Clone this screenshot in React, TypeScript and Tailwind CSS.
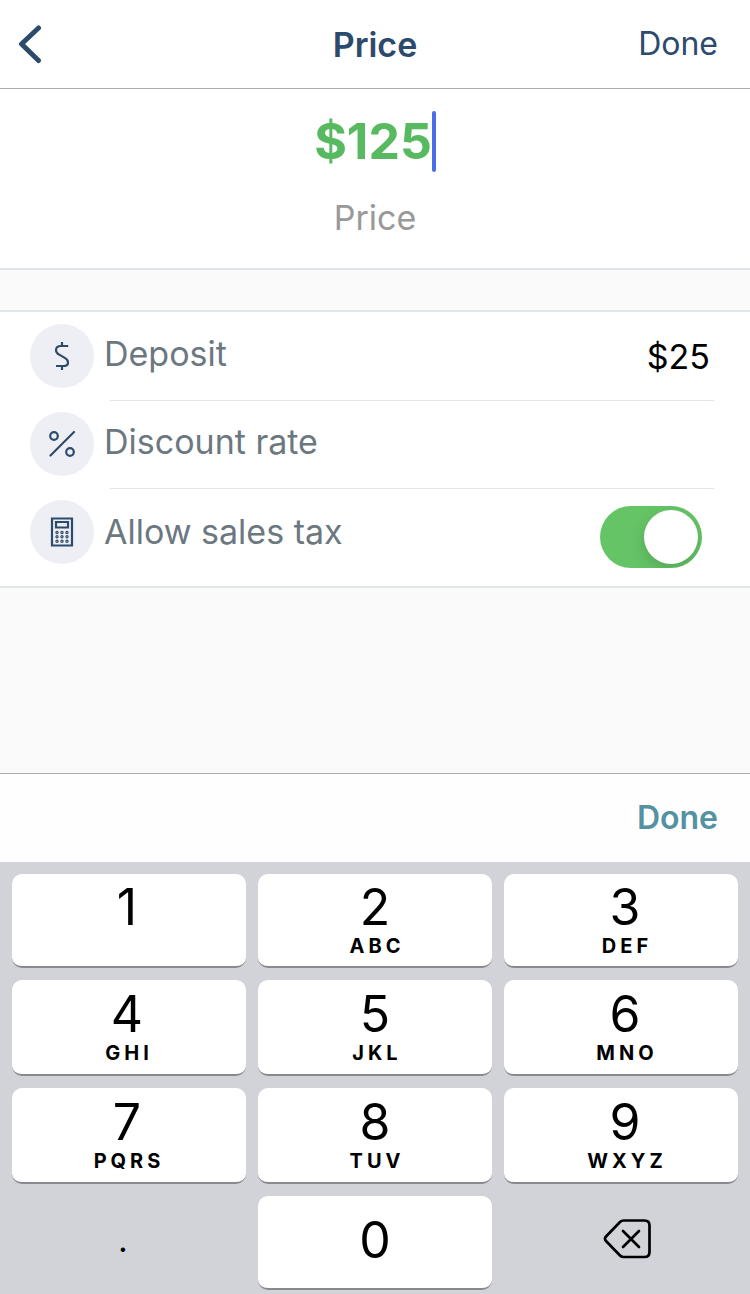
import React, { useState } from 'react';
import clsx from 'clsx';

const keys = [
  { digit: '1', letters: '' },
  { digit: '2', letters: 'ABC' },
  { digit: '3', letters: 'DEF' },
  { digit: '4', letters: 'GHI' },
  { digit: '5', letters: 'JKL' },
  { digit: '6', letters: 'MNO' },
  { digit: '7', letters: 'PQRS' },
  { digit: '8', letters: 'TUV' },
  { digit: '9', letters: 'WXYZ' },
];

const dots = [
  [27, 32.5], [32, 32.5], [37, 32.5],
  [27, 36.8], [32, 36.8], [37, 36.8],
  [27, 41.2], [32, 41.2], [37, 41.2],
];

const BackIcon = () => (
  <svg className="w-6 h-10" viewBox="0 0 24 40" fill="none" stroke="currentColor" strokeWidth="5" strokeLinecap="round" strokeLinejoin="round">
    <path d="M20.5 4 L3.5 20 L20.5 36.5" />
  </svg>
);

const DollarIcon = () => (
  <svg className="w-16 h-16" viewBox="0 0 64 64" fill="none" stroke="currentColor" strokeWidth="2.2">
    <path d="M32 18v4M32 42v4" />
    <path d="M38.2 22H31c-3.200 0-5 1.700-5 4.200 0 2.300 1.300 3.400 3.600 4.700l4.800 2.700c2.300 1.300 3.600 2.600 3.600 4.800 0 2.300-1.700 3.600-4.600 3.600H26" />
  </svg>
);

const PercentIcon = () => (
  <svg className="w-16 h-16" viewBox="0 0 64 64" fill="none" stroke="currentColor" strokeWidth="2.2" strokeLinecap="round">
    <circle cx="24" cy="24" r="3.8" />
    <circle cx="40" cy="40" r="3.8" />
    <path d="M20.5 43.5 44 20" />
  </svg>
);

const CalculatorIcon = () => (
  <svg className="w-16 h-16" viewBox="0 0 64 64" fill="none" stroke="currentColor" strokeWidth="2.2">
    <path d="M22 18.500h20v27H22z" />
    <path d="M26 22h12v5.500H26z" />
    {dots.map(([x, y]) => (
      <circle key={`${x}-${y}`} cx={x} cy={y} r="1.1" strokeWidth="1.2" />
    ))}
  </svg>
);

const DeleteIcon = () => (
  <svg className="w-12 h-10" viewBox="0 0 48 40" fill="none" stroke="currentColor" strokeWidth="2.700" strokeLinecap="round" strokeLinejoin="round">
    <path d="M20.500 1.500H41.500Q46.500 1.500 46.500 6.500V33Q46.500 38 41.500 38H20.500Q18.500 38 17 36.500L3 22Q1 19.700 3 17.500L17 3Q18.500 1.500 20.500 1.500Z" />
    <path d="M20 12 36 28M36 12 20 28" />
  </svg>
);

const iconClass = 'w-16 h-16 shrink-0 rounded-full bg-[#eeeff4] text-[#2c4a6b]';
const labelClass = 'ml-[10px] whitespace-nowrap text-[34px] leading-[60px] text-[#6c7880]';
const fieldClass = 'h-16 min-w-0 flex-1 bg-transparent text-right text-[34px] text-black outline-none';
const keyClass = 'flex flex-col items-center justify-center rounded-[10px] border-b-2 border-[#88898d] bg-white';

const App = () => {
  const [price, setPrice] = useState('$125');
  const [deposit, setDeposit] = useState('$25');
  const [discount, setDiscount] = useState('');
  const [tax, setTax] = useState(true);

  const press = (digit: string) => setPrice((value) => value + digit);

  return (
    <div className="flex min-h-screen flex-col bg-[#fafafa] font-['Inter',sans-serif]">
      {/* Navigation bar */}
      <header className="grid h-[89px] grid-cols-3 items-center border-b border-[#adadad] bg-white px-8 text-[#2c4a6b]">
        <button aria-label="Back" className="-ml-3.5 justify-self-start">
          <BackIcon />
        </button>
        <h1 className="text-center text-[34px] font-semibold">Price</h1>
        <button className="justify-self-end text-[32px]">Done</button>
      </header>

      {/* Price entry */}
      <section className="flex flex-col items-center border-b-2 border-[#dfe5e8] bg-white pt-[22px] pb-6">
        <div className="flex items-center">
          <input
            id="price"
            value={price}
            onChange={(e) => setPrice(e.target.value)}
            className="h-[61px] bg-transparent text-[50px] font-bold text-[#57b960] caret-transparent outline-none [field-sizing:content]"
          />
          <span className="h-[61px] w-1 rounded-full bg-[#4b6de8]" />
        </div>
        <label htmlFor="price" className="mt-5 text-[34px] leading-[52px] text-[#999]">
          Price
        </label>
      </section>

      {/* Options */}
      <section className="mt-10 border-y-2 border-[#dfe7e8] bg-white">
        <div className="flex h-[88px] pt-3 pr-10 pl-[30px]">
          <span className={iconClass}><DollarIcon /></span>
          <label htmlFor="deposit" className={labelClass}>Deposit</label>
          <input id="deposit" value={deposit} onChange={(e) => setDeposit(e.target.value)} className={fieldClass} />
        </div>
        <hr className="mr-9 ml-[110px] border-[#dfe7e8]" />
        <div className="flex h-[87px] pt-[11px] pr-10 pl-[30px]">
          <span className={iconClass}><PercentIcon /></span>
          <label htmlFor="discount" className={labelClass}>Discount rate</label>
          <input id="discount" value={discount} onChange={(e) => setDiscount(e.target.value)} className={fieldClass} />
        </div>
        <hr className="mr-9 ml-[110px] border-[#dfe7e8]" />
        <div className="flex h-[97px] pt-[11px] pr-12 pl-[30px]">
          <span className={iconClass}><CalculatorIcon /></span>
          <label htmlFor="tax" className="ml-[10px] flex-1 text-[34px] leading-[64px] text-[#6c7880]">Allow sales tax</label>
          <input
            id="tax"
            type="checkbox"
            role="switch"
            checked={tax}
            onChange={(e) => setTax(e.target.checked)}
            className="mt-[6px] flex h-[62px] w-[102px] appearance-none items-center overflow-hidden rounded-full bg-gray-300 px-1 before:size-[54px] before:rounded-full before:bg-white before:shadow-[0_6px_16px_rgba(0,0,0,0.15)] checked:justify-end checked:bg-[#65c466]"
          />
        </div>
      </section>

      {/* Keyboard */}
      <div className="mt-auto">
        <div className="flex h-[89px] items-center justify-end border-t border-[#adadad] bg-[#fefefe] px-8">
          <button className="text-[32px] font-semibold text-[#5492a2]">Done</button>
        </div>
        <div className="grid grid-cols-3 grid-rows-[94px_96px_96px_94px] gap-3 bg-[#d2d3d9] px-3 pt-3 pb-1 text-black">
          {keys.map((key, idx) => (
            <button
              key={key.digit}
              onClick={() => press(key.digit)}
              className={clsx(keyClass, 'pb-2', idx % 3 === 0 && 'pr-1', idx % 3 === 2 && 'pl-2')}
            >
              <span className="text-[50px] leading-[60px]">{key.digit}</span>
              <span className="h-[18px] pl-1 text-[20px] leading-[18px] font-bold tracking-[4px]">{key.letters}</span>
            </button>
          ))}
          <button onClick={() => press('.')} className="flex items-center justify-center pr-3 pb-2 text-[34px]">.</button>
          <button onClick={() => press('0')} className={clsx(keyClass, 'pb-1 text-[50px] leading-[60px]')}>0</button>
          <button aria-label="Delete" onClick={() => setPrice((value) => value.slice(0, -1))} className="flex items-center justify-center pb-2 pl-3">
            <DeleteIcon />
          </button>
        </div>
      </div>
    </div>
  );
};

export default App;
